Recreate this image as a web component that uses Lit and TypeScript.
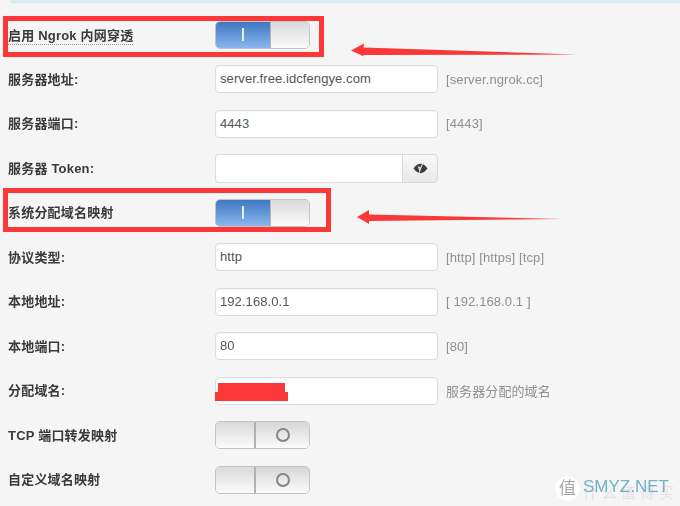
import { LitElement, html, css, svg } from "lit";
import { customElement } from "lit/decorators.js";

type Row = {
  label: string;
  kind: "input" | "token" | "on" | "off" | "masked";
  value?: string;
  hint?: string;
  dotted?: boolean;
};

const ROWS: Row[] = [
  { label: "启用 Ngrok 内网穿透", kind: "on", dotted: true },
  { label: "服务器地址:", kind: "input", value: "server.free.idcfengye.com", hint: "[server.ngrok.cc]" },
  { label: "服务器端口:", kind: "input", value: "4443", hint: "[4443]" },
  { label: "服务器 Token:", kind: "token" },
  { label: "系统分配域名映射", kind: "on" },
  { label: "协议类型:", kind: "input", value: "http", hint: "[http] [https] [tcp]" },
  { label: "本地地址:", kind: "input", value: "192.168.0.1", hint: "[ 192.168.0.1 ]" },
  { label: "本地端口:", kind: "input", value: "80", hint: "[80]" },
  { label: "分配域名:", kind: "masked", hint: "服务器分配的域名" },
  { label: "TCP 端口转发映射", kind: "off" },
  { label: "自定义域名映射", kind: "off" },
];

@customElement("app-root")
export class AppRoot extends LitElement {
  static styles = css`
    :host {
      display: block;
      position: relative;
      width: 680px;
      height: 506px;
      overflow: hidden;
      background: #f5f5f5;
      font-family: "Liberation Sans", "Noto Sans CJK SC", sans-serif;
      color: #333;
    }
    .notice {
      height: 3px;
      margin-left: 10px;
      background: #d9edf7;
      border-bottom: 1px solid #cfe8f6;
      border-bottom-left-radius: 4px;
      box-sizing: border-box;
    }
    .form {
      display: grid;
      grid-template-columns: 207px 1fr;
      grid-auto-rows: 44.5px;
      padding: 9.25px 0 0 8px;
      align-items: center;
      filter: blur(0.35px);
    }
    .label {
      font-size: 13px;
      font-weight: 700;
      color: #3a3a3a;
      letter-spacing: 0.2px;
      white-space: nowrap;
      padding-bottom: 2px;
    }
    .dotted {
      justify-self: start;
      border-bottom: 1px dotted #999;
      line-height: 16px;
      padding-bottom: 0;
      margin-top: 3px;
    }
    .field {
      display: flex;
      align-items: center;
      gap: 8px;
    }
    .input {
      width: 223px;
      height: 28px;
      box-sizing: border-box;
      background: #fff;
      border: 1px solid #dcdcdc;
      border-radius: 4px;
      padding: 0 4px;
      font-size: 13px;
      letter-spacing: 0.08px;
      line-height: 26px;
      color: #555;
      box-shadow: inset 0 1px 1px rgba(0, 0, 0, 0.04);
      position: relative;
    }
    .hint {
      font-size: 13px;
      letter-spacing: 0.1px;
      color: #8f8f8f;
      white-space: nowrap;
    }
    .group {
      display: flex;
      width: 223px;
      height: 29px;
    }
    .group .left {
      flex: 1;
      height: 29px;
      box-sizing: border-box;
      background: #fff;
      border: 1px solid #dcdcdc;
      border-right: 0;
      border-radius: 4px 0 0 4px;
    }
    .eye {
      width: 36px;
      box-sizing: border-box;
      border: 1px solid #d8d8d8;
      border-radius: 0 4px 4px 0;
      background: linear-gradient(#f8f8f8, #e8e8e8);
      display: flex;
      align-items: center;
      justify-content: center;
    }
    .eye svg { width: 15px; height: 13px; }
    .switch {
      display: flex;
      width: 95px;
      height: 28px;
      box-sizing: border-box;
      border: 1px solid #c4c4c4;
      border-radius: 5px;
      overflow: hidden;
    }
    .blue {
      width: 54px;
      background: linear-gradient(#3f77c4, #8ab6ec);
      display: flex;
      align-items: center;
      justify-content: center;
    }
    .bar { width: 2px; height: 13px; background: #e6f0fb; }
    .handle {
      flex: 1;
      background: linear-gradient(#d9d9d9, #fbfbfb);
      border-left: 1px solid #b5b5b5;
    }
    .blank {
      width: 38px;
      background: linear-gradient(#d9d9d9, #fbfbfb);
    }
    .round {
      flex: 1;
      background: linear-gradient(#d6d6d6, #fbfbfb);
      border-left: 2px solid #b0b0b0;
      display: flex;
      align-items: center;
      justify-content: center;
    }
    .ring {
      width: 14px;
      height: 14px;
      box-sizing: border-box;
      border: 2px solid #858585;
      border-radius: 50%;
    }
    .mask {
      position: absolute;
      left: -1px;
      top: 5px;
      width: 73px;
      height: 18px;
    }
    .overlay {
      position: absolute;
      left: 0;
      top: 0;
      width: 680px;
      height: 506px;
      pointer-events: none;
    }
    .frame {
      position: absolute;
      box-sizing: border-box;
      border: 5px solid #fb3838;
    }
    .f1 { left: 3px; top: 16px; width: 321px; height: 41px; }
    .f2 { left: 3px; top: 188px; width: 328px; height: 44px; }
    .wm {
      position: absolute;
      left: 555px;
      top: 476px;
      display: flex;
      align-items: flex-start;
      gap: 3px;
    }
    .wm-circle {
      width: 25px;
      height: 25px;
      border-radius: 50%;
      background: rgba(255, 255, 255, 0.95);
      color: #a8a8a8;
      font-size: 17px;
      line-height: 25px;
      text-align: center;
    }
    .wm-text {
      font-size: 17px;
      line-height: 21px;
      color: #6fb4c8;
    }
    .wm-under {
      position: absolute;
      left: 28px;
      top: 9px;
      font-size: 15px;
      line-height: 16px;
      letter-spacing: 4px;
      color: rgba(160, 160, 160, 0.22);
      white-space: nowrap;
    }
  `;

  private control(r: Row) {
    switch (r.kind) {
      case "on":
        return html`<div class="switch"><div class="blue"><div class="bar"></div></div><div class="handle"></div></div>`;
      case "off":
        return html`<div class="switch"><div class="blank"></div><div class="round"><div class="ring"></div></div></div>`;
      case "token":
        return html`<div class="group">
          <div class="left"></div>
          <div class="eye">
            <svg viewBox="0 0 16 14">
              <path d="M0.500 7C3 3.500 5.500 2 8 2s5 1.500 7.500 5c-2.500 3.500-5 5-7.500 5S3 10.500.5 7z" fill="#3c3c3c"/>
              <path d="M5 4.500L8.500 5.500L7 10.500z" fill="#dcdcdc"/>
              <path d="M10.500 1L6 13" stroke="#f2f2f2" stroke-width="1"/>
            </svg>
          </div>
        </div>`;
      case "masked":
        return html`<div class="input">
          <svg class="mask" viewBox="0 0 73 18"><path d="M3 0H70V9H73V18H0V9H3z" fill="#fb3838"/></svg>
        </div>`;
      default:
        return html`<div class="input">${r.value}</div>`;
    }
  }

  render() {
    return html`
      <div class="notice"></div>
      <div class="form">
        ${ROWS.map(
          (r) => html`
            <div class="label ${r.dotted ? "dotted" : ""}">${r.label}</div>
            <div class="field">
              ${this.control(r)}
              ${r.hint ? html`<span class="hint">${r.hint}</span>` : ""}
            </div>
          `
        )}
      </div>
      <div class="overlay">
        <div class="frame f1"></div>
        <div class="frame f2"></div>
        <svg width="680" height="506" style="position:absolute;left:0;top:0">
          ${svg`
            <path d="M351 50.500L364 43.500L363.500 47.500L577 54.500L363 55L364 56.500Z" fill="#fb3838"/>
            <path d="M357 217L369 210L369 214.500L562 219L369 221L369 224Z" fill="#fb3838"/>
          `}
        </svg>
        <div class="wm">
          <div class="wm-circle">值</div>
          <div class="wm-under">什么值得买</div>
          <div class="wm-text">SMYZ.NET</div>
        </div>
      </div>
    `;
  }
}
